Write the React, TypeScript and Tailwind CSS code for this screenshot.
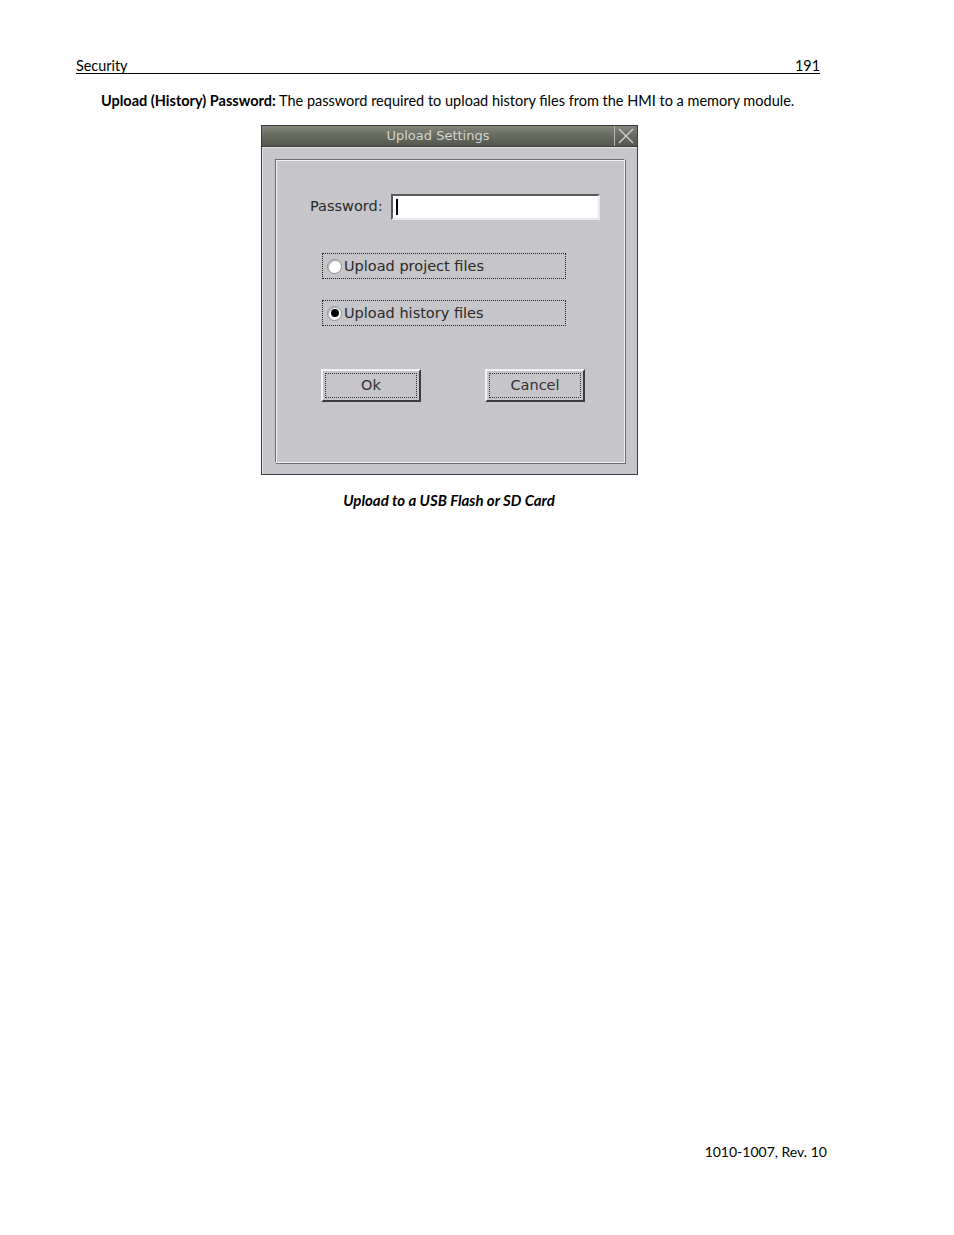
import React from "react";

const docFont = { fontFamily: "Lato, 'Open Sans', sans-serif" };

function Radio({ checked, label }: { checked?: boolean; label: string }) {
  return (
    <div className="flex h-[26px] w-[244px] items-center border border-dotted border-[#222] pl-[4px]">
      <span className="relative flex h-[15px] w-[15px] items-center justify-center rounded-full border border-[#8a8a8a] bg-white shadow-[inset_1px_1px_0_#b0b0b0]">
        {checked && <span className="h-[8px] w-[8px] rounded-full bg-black" />}
      </span>
      <span className="ml-[2px] text-[14.5px] leading-none text-[#2a2a2a]">{label}</span>
    </div>
  );
}

function Button({ label }: { label: string }) {
  return (
    <button className="h-[33px] w-[100px] border-t-2 border-l-2 border-r-2 border-b-2 border-t-[#f4f4f4] border-l-[#f4f4f4] border-r-[#3c3c3c] border-b-[#3c3c3c] bg-[#c6c5c9] p-[2px]">
      <span className="flex h-full w-full items-center justify-center border border-dotted border-[#333] text-[14.5px] text-[#333]">
        {label}
      </span>
    </button>
  );
}

export default function App() {
  return (
    <div className="flex h-[1235px] w-[954px] flex-col bg-white text-black" style={docFont}>
      {/* running header */}
      <div className="ml-[76px] mt-[58px] flex w-[744px] justify-between border-b border-black text-[14.4px] leading-[15px]">
        <span>Security</span>
        <span>191</span>
      </div>

      <p className="ml-[101px] mt-[18px] whitespace-nowrap text-[14.5px] leading-[18px]">
        <span className="font-bold">Upload (History) Password:</span> The password required to upload history files
        from the HMI to a memory module.
      </p>

      {/* HMI dialog screenshot */}
      <div
        className="ml-[261px] mt-[15px] flex h-[350px] w-[377px] flex-col border border-[#3a3a44] bg-[#c6c5c9]"
        style={{ fontFamily: "'DejaVu Sans', Verdana, sans-serif" }}
      >
        <div className="flex h-[21px] items-stretch border-b border-[#3f423a] bg-gradient-to-b from-[#83867a] via-[#666a5e] to-[#54574d]">
          <div className="flex flex-1 items-center justify-center text-[13px] text-[#d6d6d2]">Upload Settings</div>
          <div className="flex w-[23px] items-center justify-center border-l border-[#b8b9b2]">
            <svg width="16" height="16" viewBox="0 0 16 16">
              <path d="M1 1 L15 15 M15 1 L1 15" stroke="#d4d5cf" strokeWidth="1.3" />
            </svg>
          </div>
        </div>
        <div className="flex flex-1 border-l border-t border-[#e6e6e8] px-[12px] pb-[11px] pt-[11px]">
          <div className="flex flex-1 flex-col border border-t-[#6b6b6b] border-l-[#6b6b6b] border-r-[#f2f2f2] border-b-[#f2f2f2] shadow-[inset_1px_1px_0_#f2f2f2,1px_1px_0_#6b6b6b]">
            <div className="mt-[34px] flex items-center pl-[34px]">
              <span className="text-[14.5px] text-[#2a2a2a]">Password:</span>
              <div className="ml-[8px] flex h-[26px] w-[209px] items-center border-2 border-t-[#5a5a5a] border-l-[#5a5a5a] border-r-[#e8e8e8] border-b-[#e8e8e8] bg-white pl-[3px]">
                <span className="h-[16px] w-[2px] bg-black" />
              </div>
            </div>
            <div className="ml-[46px] mt-[33px] flex flex-col gap-[21px]">
              <Radio label="Upload project files" />
              <Radio checked label="Upload history files" />
            </div>
            <div className="ml-[45px] mt-[43px] flex gap-[64px]">
              <Button label="Ok" />
              <Button label="Cancel" />
            </div>
          </div>
        </div>
      </div>

      <p className="mt-[16px] w-[898px] text-center text-[15px] font-bold italic leading-[18px]">
        Upload to a USB Flash or SD Card
      </p>

      <div className="flex-1" />
      <p className="mb-[74px] mr-[127px] text-right text-[14px] leading-[18px]">1010-1007, Rev. 10</p>
    </div>
  );
}
